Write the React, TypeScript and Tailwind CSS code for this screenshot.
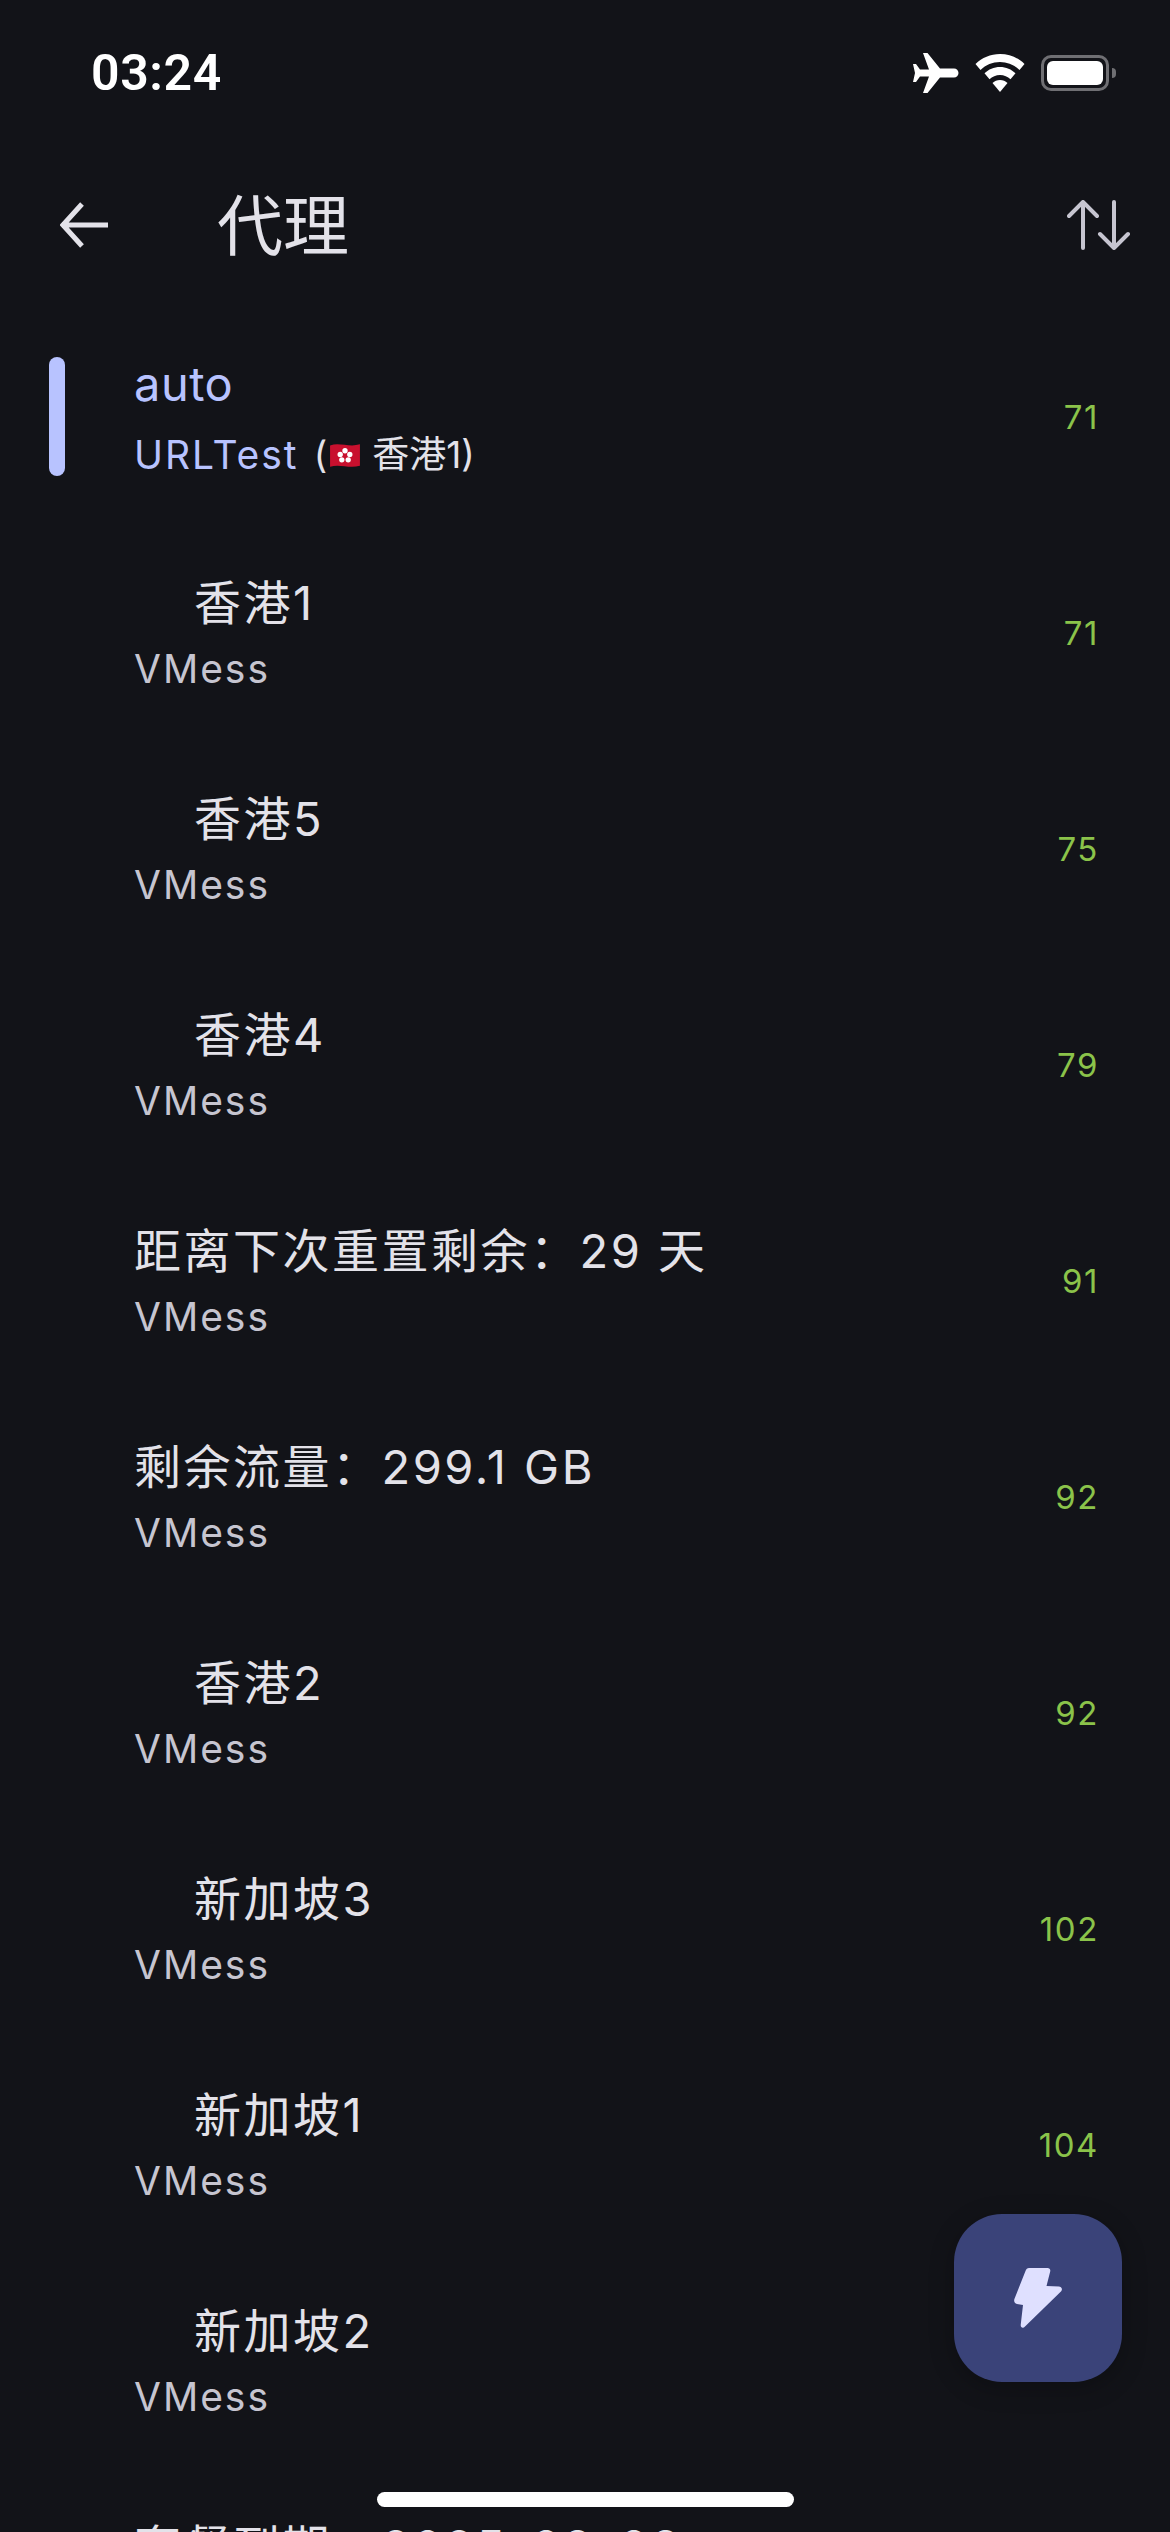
const rows = [
  { t: "香港1", d: "71", i: true },
  { t: "香港5", d: "75", i: true },
  { t: "香港4", d: "79", i: true },
  { t: "距离下次重置剩余：29 天", d: "91", i: false },
  { t: "剩余流量：299.1 GB", d: "92", i: false },
  { t: "香港2", d: "92", i: true },
  { t: "新加坡3", d: "102", i: true },
  { t: "新加坡1", d: "104", i: true },
  { t: "新加坡2", d: "105", i: true },
  { t: "套餐到期：2025-09-09", d: "", i: false },
];

const fontFamily = "font-['Inter','Noto_Sans_CJK_SC',sans-serif]";

function Row({ t, d, i }: { t: string; d: string; i: boolean }) {
  return (
    <div className="flex h-[216px] items-center pl-[134px] pr-[71px]">
      <div className="flex-1 pt-[2px]">
        <div className={`text-[47px] leading-[62px] tracking-[2.5px] text-[#e3e2e9] ${i ? "pl-[60px]" : ""}`}>{t}</div>
        <div className="mt-[10px] text-[39px] leading-[50px] tracking-[2px] text-[#c6c5d0]">VMess</div>
      </div>
      <div className="pt-[3px] text-[33px] tracking-[1.6px] text-[#8bc34a]">{d}</div>
    </div>
  );
}

export default function App() {
  return (
    <div className={`relative h-[2532px] w-[1170px] overflow-hidden bg-[#121318] ${fontFamily}`}>
      <div className="flex h-[141px] items-center justify-between pb-[45px] pl-[91px] pr-[54px] pt-[50px]">
        <div className="font-['Roboto',sans-serif] text-[50px] font-semibold leading-[46px] tracking-[0.6px] text-white">03:24</div>
        <div className="flex items-center gap-[16px]">
          <svg width="46" height="40" viewBox="0 0 46 40" fill="#fff">
            <path d="M0 11h3l4 5.5h9L10 0h4.5L27 15.5h14c2.5 0 4.500 2 4.500 4.500S43.500 24.500 41 24.500H27L14.500 40H10l6-16.500H7L3 29H0l2-9z" />
          </svg>
          <svg width="50" height="38" viewBox="0 0 50 38" fill="#fff">
            <path d="M25 0c9.500 0 18 3.700 24.500 10l-5 6C39.200 10.800 32.500 8 25 8S10.800 10.800 5.500 16l-5-6C7 3.700 15.500 0 25 0z" />
            <path d="M25 13c6 0 11.500 2.400 15.500 6.300l-5 5.900C32.800 22.700 29 21 25 21s-7.800 1.700-10.500 4.200l-5-5.900C13.500 15.400 19 13 25 13z" />
            <path d="M25 26c2.900 0 5.500 1 7.500 2.900L25 38l-7.500-9.100C19.500 27 22.100 26 25 26z" />
          </svg>
          <div className="flex items-center gap-[3px]">
            <div className="flex h-[36px] w-[68px] items-center justify-center rounded-[10px] border-[3px] border-[#6f6f73]">
              <div className="h-[24px] w-[56px] rounded-[6px] bg-white" />
            </div>
            <div className="h-[10px] w-[4px] rounded-r-full bg-[#6f6f73]" />
          </div>
        </div>
      </div>

      <div className="flex h-[167px] items-center pl-[60px] pr-[39px]">
        <svg width="48" height="48" viewBox="0 0 48 48" fill="none" stroke="#e3e2e9" strokeWidth="5">
          <path d="M48 24H4M22 3 3 24l19 21" strokeLinejoin="miter" />
        </svg>
        <div className="ml-[109px] flex-1 pt-[3px] text-[66px] leading-[76px] text-[#e3e2e9]">代理</div>
        <svg width="64" height="50" viewBox="0 0 64 50" fill="none" stroke="#c6c5d0" strokeWidth="4" strokeLinecap="round" strokeLinejoin="round">
          <path d="M16 2v46M2 16 16 2l14 14M47 2v46M33 34l14 14 14-14" />
        </svg>
      </div>

      <div className="relative flex h-[216px] items-center pl-[134px] pr-[71px]">
        <div className="absolute left-[49px] top-[49px] h-[119px] w-[16px] rounded-full bg-[#b8c3ff]" />
        <div className="flex-1">
          <div className="text-[47px] leading-[62px] tracking-[0.5px] text-[#b8c3ff]">auto</div>
          <div className="mt-[15px] flex items-center leading-[50px]">
            <span className="text-[39px] tracking-[2px] text-[#b8c3ff]">URLTest</span>
            <span className="ml-[15px] flex items-center text-[37px] text-[#e3e2e9]">
              (
              <svg width="32" height="28" viewBox="0 0 30 26" className="mx-[2px]">
                <path d="M1 4c9-3 18 2 28-1v20c-10 3-19-2-28 1z" fill="#c8102e" />
                <g fill="#fff">
                  <circle cx="15" cy="9" r="2.500" />
                  <circle cx="10.500" cy="12.500" r="2.500" />
                  <circle cx="19.500" cy="12.500" r="2.500" />
                  <circle cx="12" cy="17.500" r="2.500" />
                  <circle cx="18" cy="17.500" r="2.500" />
                </g>
              </svg>
              <span className="ml-[9px]">香港1)</span>
            </span>
          </div>
        </div>
        <div className="pt-[3px] text-[33px] tracking-[1.6px] text-[#8bc34a]">71</div>
      </div>

      {rows.map((r) => (
        <Row key={r.t} {...r} />
      ))}

      <div className="absolute left-[954px] top-[2214px] flex h-[168px] w-[168px] items-center justify-center rounded-[48px] bg-[#3a4379] shadow-[0_6px_24px_rgba(0,0,0,0.25)]">
        <svg width="48" height="60" viewBox="0 0 48 60" fill="#dfe0ff">
          <path d="M11.500 3C12 1 13.500 0 15 0h18.500c2 0 3.200 1.500 2.700 3.500L32.500 18l12.500 0.500c2.600.2 3.800 2.800 2.200 4.700L11 58.500c-2 2.300-4.500 1-4.300-1.500L9 37 3 36c-2.300-.5-3.400-2.800-2.600-5z" />
        </svg>
      </div>

      <div className="absolute left-[377px] top-[2492px] h-[15px] w-[417px] rounded-full bg-white" />
    </div>
  );
}
